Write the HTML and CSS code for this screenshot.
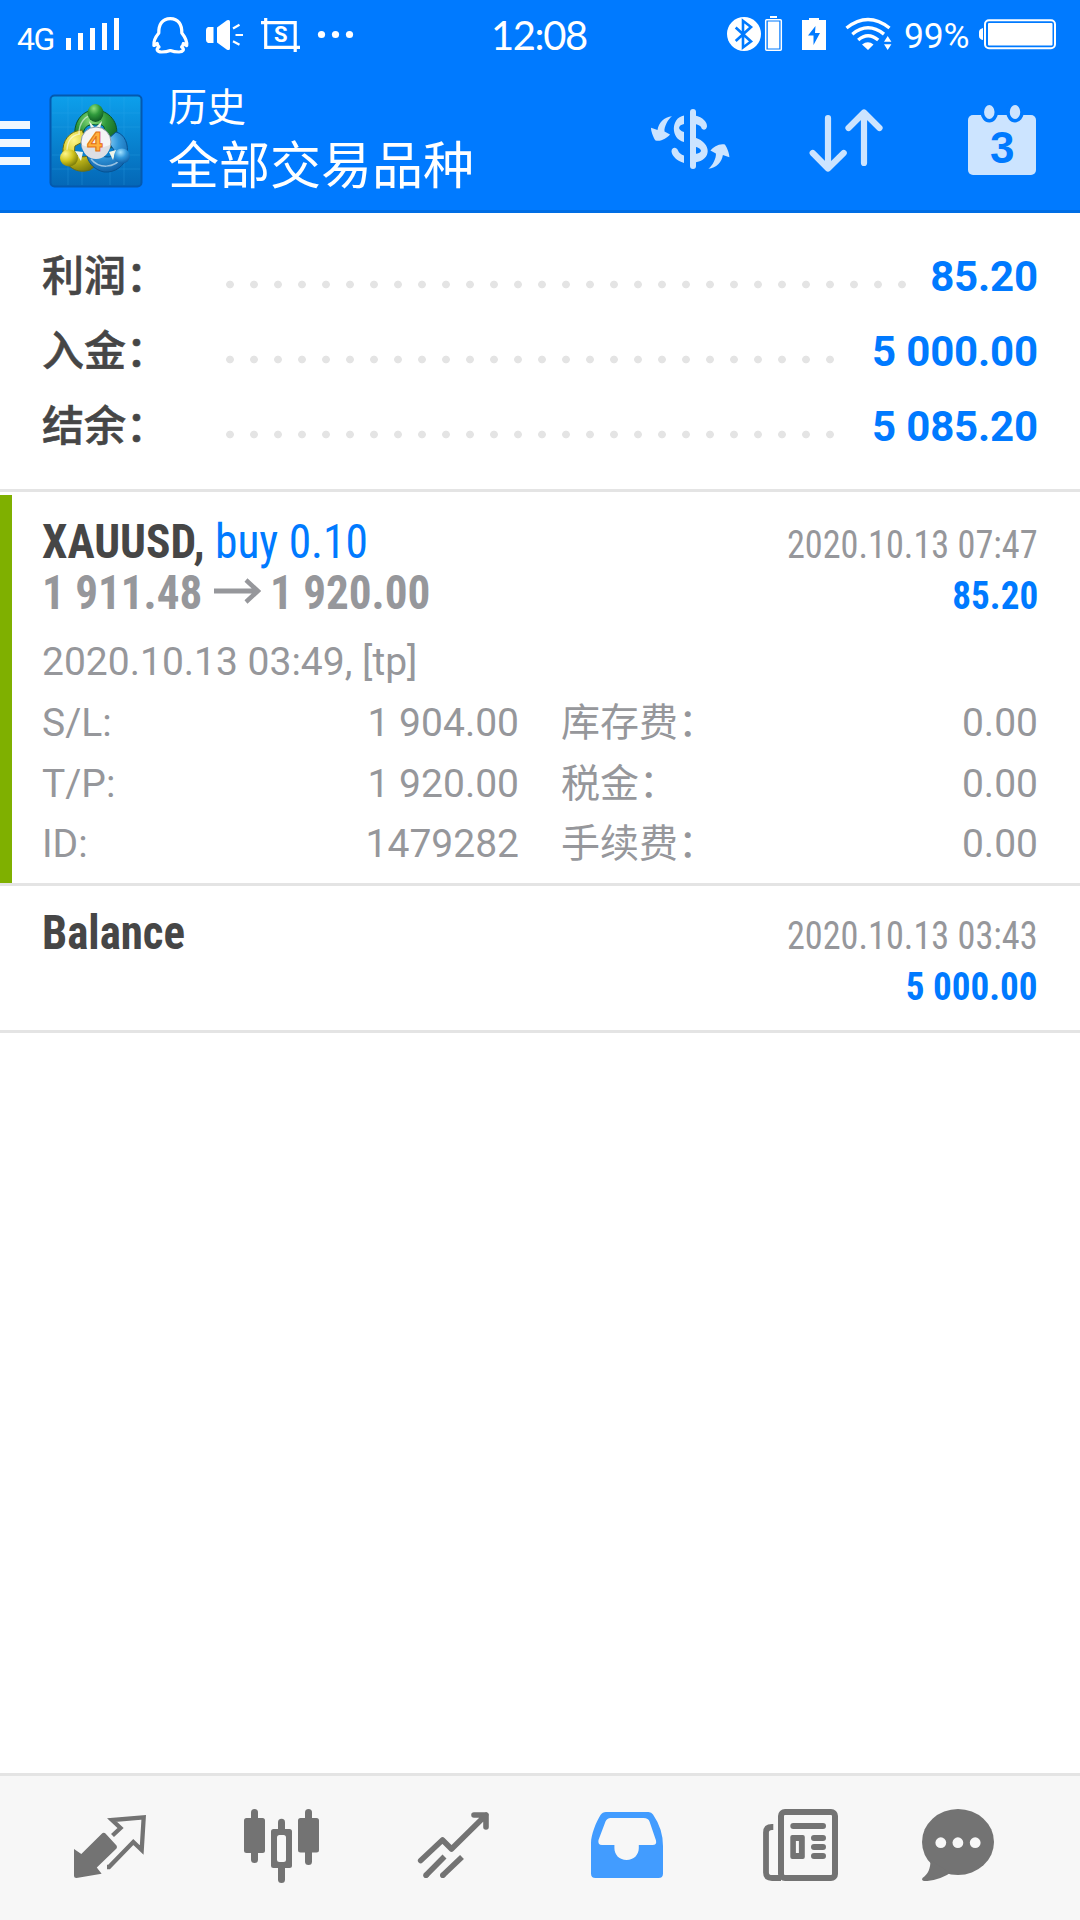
FILE: index.html
```html
<!DOCTYPE html>
<html lang="zh-CN">
<head>
<meta charset="utf-8">
<title>历史</title>
<link rel="stylesheet" href="styles.css">
</head>
<body>
<div class="screen">
  <header class="header">
    <div class="status">
      <span class="network">4G</span>
      <svg class="status-left" viewBox="60 0 300 64" fill="#fff">
        <path d="M66 38h5v12h-5zM78 33h5v17h-5zM90 28h5v22h-5zM102 23h5v27h-5zM114 18h5v32h-5z"/>
        <path fill="none" stroke="#fff" stroke-width="3.2" stroke-linejoin="round" d="M170.3 18.6C162 18.6 158.6 25 158.8 33C155.5 37 153.3 41 153.9 45.5L157.3 43.5C157.4 45 158 46 159 47C155.5 49.5 157.5 52 161.5 52C165.5 52 168 51.5 170.3 50.6C172.6 51.5 175 52 179 52C183 52 185 49.5 181.6 47C182.6 46 183.2 45 183.3 43.5L186.7 45.5C187.3 41 185 37 181.8 33C182 25 178.6 18.6 170.3 18.6Z"/>
        <path d="M208 27h5.5v16H208q-2-1-2-3V30q0-2 2-3zM217 27.500L227 20.300q3-1.300 3 1.500v26.400q0 2.800-3 1.500L217 42.500z"/>
        <path fill="none" stroke="#fff" stroke-width="2.200" d="M233 28.500l6.500-3.800M235.500 35h7.500M233 41.300l6.500 3.500"/>
        <path fill="none" stroke="#fff" stroke-width="3.200" d="M261 22.700h34.200V52M265.700 18v29.300H300"/>
        <text class="crop-letter" x="280.700" y="42.300">S</text>
        <circle cx="321.500" cy="34.500" r="3.600"/><circle cx="335.500" cy="34.500" r="3.600"/><circle cx="349.500" cy="34.500" r="3.600"/>
      </svg>
      <span class="clock">12:08</span>
      <svg class="status-right" viewBox="720 0 180 64" fill="#fff">
        <circle cx="744" cy="34" r="17"/>
        <path fill="none" stroke="#007aff" stroke-width="2.600" d="M735.700 27.500L751 41.500L743 47.500V20.800L751 27L735.700 41"/>
        <path d="M770 16h7v2h-7z"/><rect x="765.700" y="19.700" width="15.600" height="30.600" rx="1" fill="none" stroke="#fff" stroke-width="1.500"/><path d="M767.800 21.500h11.500v27h-11.500z"/>
        <path d="M802 20h7v-2h10v2h7v30h-24z"/><path fill="#007aff" d="M815.500 26L808 35.500h5.500V45L820 33h-5z"/>
        <path fill="none" stroke="#fff" stroke-width="3.400" d="M846.500 28Q868 11 889.500 28M852.300 34.200Q868 21.500 884 34.200M858.200 40Q868 31.500 878.200 40"/>
        <path d="M862 44.500Q868 40 873.500 44.500L868 50zM887.700 36l3.700 5.800h-7.400zM887.700 50l3.700-5.800h-7.400z"/>
      </svg>
      <span class="percent">99%</span>
      <svg class="battery" viewBox="976 0 84 64" fill="#fff">
        <rect x="985" y="20.300" width="70" height="28" rx="4" fill="none" stroke="#fff" stroke-width="2"/>
        <rect x="988" y="23" width="64.500" height="22.500" rx="1"/>
        <path d="M983 28v12q-4-1-4-4v-4q0-3 4-4z"/>
      </svg>
    </div>
    <div class="toolbar">
      <svg class="menu" viewBox="0 64 49 146" fill="#eff7ff"><path d="M0 121h30v8H0zM0 139h30v8H0zM0 157h30v8H0z"/></svg>
      <svg class="logo" viewBox="0 0 94 94">
        <defs>
          <linearGradient id="bg" x2="0" y2="1"><stop offset="0" stop-color="#0da0ec"/><stop offset="1" stop-color="#0467b6"/></linearGradient>
          <radialGradient id="green" cx=".4" cy=".25" r=".8"><stop offset="0" stop-color="#8fe07f"/><stop offset=".45" stop-color="#2f9a3c"/><stop offset="1" stop-color="#0b5320"/></radialGradient>
          <radialGradient id="yellow" cx=".3" cy=".25" r=".85"><stop offset="0" stop-color="#fdf68a"/><stop offset=".5" stop-color="#d2c51d"/><stop offset="1" stop-color="#6f7309"/></radialGradient>
          <radialGradient id="blue" cx=".4" cy=".25" r=".85"><stop offset="0" stop-color="#a5e2ff"/><stop offset=".45" stop-color="#3197db"/><stop offset="1" stop-color="#07529b"/></radialGradient>
        </defs>
        <rect x="1.500" y="1.500" width="91" height="91" rx="4" fill="url(#bg)" stroke="#0459ae" stroke-width="2"/>
        <path d="M19 3v88M33 3v88M61 3v88M75 3v88M3 19h88M3 33h88M3 61h88M3 75h88" stroke="#3ab0f0" stroke-width=".6" opacity=".4"/>
        <path d="M26 43C24 26 35 16 46 16C60 16 71 29 67 44C66 52 62 54 57 56L53 43C58 34 55 29 47 31C38 29 34 35 34 42Z" fill="url(#green)" stroke="#0c5526"/>
        <path d="M33 36C20 37 13 47 14 59C17 74 28 80 41 76L51 68L39 62C29 65 24 60 26 52L37 46Z" fill="url(#yellow)" stroke="#6d6d10"/>
        <path d="M67 38C76 40 80 51 78 61C76 72 66 79 55 78C46 76 40 70 38 62L50 61C60 65 66 63 65 56L58 46Z" fill="url(#blue)" stroke="#075292"/>
        <path d="M30 40C30 29 36 21 45 21M18 57C18 47 23 41 31 40M42 65C49 74 65 76 74 62" fill="none" stroke="#fff" stroke-width="1.500" opacity=".55"/>
        <path d="M40 27L46 34L53 27L50 38H43ZM26 57L34 58L32 67ZM60 58L67 56L64 66Z" fill="#eef5e9"/>
        <ellipse cx="46.500" cy="19" rx="8" ry="9" fill="url(#green)"/>
        <ellipse cx="20" cy="64" rx="9" ry="8.500" fill="url(#yellow)"/>
        <ellipse cx="73" cy="62" rx="8" ry="7.500" fill="url(#blue)"/>
        <circle cx="47" cy="48" r="15" fill="#f4f4f6" stroke="#8c9bab"/>
        <path d="M33 51Q47 57 61 51A14 14 0 0 1 33 51Z" fill="#dddfe4"/>
        <text class="logo-digit" x="46" y="57">4</text>
      </svg>
      <div class="titles">
        <span class="subtitle">历史</span>
        <span class="title">全部交易品种</span>
      </div>
      <svg class="action" viewBox="642 64 96 146" fill="#cce4ff">
        <rect x="690" y="109" width="6" height="60" rx="3"/>
        <path d="M695 115.500C703 117 707 122 707 126.500C706 131 702 130.500 701 127C700 125.500 698 124.500 695 124ZM695 137.500C712 143 712 160 695 162.500V154C703 153 703 149 695 146.500ZM684 115.500C670.500 118 670.500 139 684 142V132C677.500 130 677.500 125.500 684 124ZM684 163C677 161 672 156 671.500 151.500C671.500 147 676.500 146.500 678 150.500C679 153 681 154.500 684 155.500Z"/>
        <path id="swap" d="M672 116.300C664 117 658.500 123 657.500 130L651 127.700C651 131 653 137 655.500 140.500C661 142 667 138 670 134.500L664.500 131.500C664 127 668 119 672 116.300Z"/>
        <use href="#swap" transform="rotate(180 690.200 142.500)"/>
      </svg>
      <svg class="action" viewBox="798 64 96 146" fill="none" stroke="#cce4ff" stroke-width="6.200" stroke-linecap="round" stroke-linejoin="round">
        <path d="M828 118v50M812.700 153L828 168.500L843.700 153M864 163v-50M848.500 128L864 112.500L879.500 128"/>
      </svg>
      <svg class="action" viewBox="954 64 96 146" fill="#cce4ff">
        <rect x="968" y="115" width="68" height="60" rx="5"/>
        <g stroke="#007aff" stroke-width="3.500"><ellipse cx="989.300" cy="112" rx="7" ry="8.700"/><ellipse cx="1015" cy="112" rx="7" ry="8.700"/></g>
        <text class="calendar-digit" x="1002.300" y="162.500">3</text>
      </svg>
    </div>
  </header>

  <section class="summary">
    <div class="sum-row"><span class="sum-label">利润：</span><span class="dots"></span><span class="sum-value">85.20</span></div>
    <div class="sum-row"><span class="sum-label">入金：</span><span class="dots"></span><span class="sum-value">5 000.00</span></div>
    <div class="sum-row"><span class="sum-label">结余：</span><span class="dots"></span><span class="sum-value">5 085.20</span></div>
  </section>

  <section class="entry trade">
    <div class="line"><div class="heading">XAUUSD, <span class="side">buy 0.10</span></div><div class="date">2020.10.13 07:47</div></div>
    <div class="line"><div class="heading prices">1 911.48<svg class="arrow" viewBox="0 0 50 26" preserveAspectRatio="none"><path d="M0 13H46M34 2L46.500 13L34 24" fill="none" stroke="#96979b" stroke-width="4.800"/></svg>1 920.00</div><div class="amount">85.20</div></div>
    <div class="details">
      <div class="detail comment"><span>2020.10.13 03:49, [tp]</span></div>
      <div class="detail"><span>S/L:</span><span>1 904.00</span></div>
      <div class="detail"><span>库存费：</span><span>0.00</span></div>
      <div class="detail"><span>T/P:</span><span>1 920.00</span></div>
      <div class="detail"><span>税金：</span><span>0.00</span></div>
      <div class="detail"><span>ID:</span><span>1479282</span></div>
      <div class="detail"><span>手续费：</span><span>0.00</span></div>
    </div>
  </section>

  <section class="entry balance">
    <div class="line"><div class="heading narrow">Balance</div><div class="date">2020.10.13 03:43</div></div>
    <div class="line total"><div class="amount">5 000.00</div></div>
  </section>

  <nav class="tabs">
    <svg class="tab" viewBox="22 1776 173 144">
      <path d="M74 1849L81.300 1854L101.500 1834Q103.500 1832 105.500 1833.500L116.500 1845.500Q117.500 1847 116.500 1848.500L96.800 1867.600L101.600 1873.700L76.500 1878Q74 1878 74 1875.500Z"/>
      <path class="stroke" stroke-width="4.300" d="M107 1867H109L133.300 1842L141.700 1850L143.700 1817.300L112 1820L120.500 1828L112.500 1835.500"/>
    </svg>
    <svg class="tab" viewBox="195 1776 173 144">
      <rect x="251" y="1809" width="7" height="54" rx="3.500"/><rect x="244" y="1818" width="21" height="35" rx="2.500"/>
      <rect x="278" y="1818.700" width="7" height="64.300" rx="3.500"/><rect x="271" y="1829" width="21" height="39" rx="2.500"/><rect class="hole" x="277" y="1835" width="9" height="27" rx="2.500"/>
      <rect x="305" y="1809" width="7" height="56" rx="3.500"/><rect x="298" y="1818" width="21" height="34.500" rx="2.500"/>
    </svg>
    <svg class="tab" viewBox="368 1776 173 144">
      <path class="stroke round" stroke-width="5.600" d="M420.700 1860.500L442.500 1840L451.500 1849L486 1815M474 1815H486V1827"/>
      <path class="stroke" stroke-width="5.600" d="M426 1875.300L444.500 1856.500M442.800 1875.300L462 1857"/>
      <circle cx="426" cy="1875.300" r="2.800"/><circle cx="442.800" cy="1875.300" r="2.800"/>
    </svg>
    <svg class="tab active" viewBox="541 1776 173 144">
      <path fill-rule="evenodd" d="M606 1812H648.500Q651.500 1812 653 1814.500Q663 1829 663 1846V1873.500Q663 1878 658.500 1878H595.500Q591 1878 591 1873.500V1843C591 1835 596 1822 600.500 1815Q602.500 1812 606 1812ZM610.600 1818Q607 1818 605.500 1821.500L598.500 1840Q597.500 1845 602 1845H614.400V1848C614.400 1855 619.500 1860 626.600 1860S638.800 1855 638.800 1848V1845H652.500Q657 1845 656 1840.500L649.500 1821.500Q648.500 1818 643.500 1818Z"/>
    </svg>
    <svg class="tab" viewBox="714 1776 173 144">
      <rect class="stroke" stroke-width="6" x="781" y="1812" width="54" height="66" rx="4"/>
      <path class="stroke" stroke-width="5.800" d="M773.300 1827H772Q766 1827 766 1832.500V1872.500Q766 1878 772 1878H781"/>
      <path class="stroke round" stroke-width="6" d="M793.300 1826H823M814 1838H823M814 1847H823M814 1856H823"/>
      <rect x="790.300" y="1835" width="14.500" height="24" rx="2"/><rect class="hole" x="795.900" y="1841" width="3" height="12"/>
    </svg>
    <svg class="tab" viewBox="887 1776 173 144">
      <ellipse cx="958" cy="1842" rx="36" ry="33"/>
      <path d="M930.500 1860C930.500 1869 928 1874 922.500 1878Q921 1880.500 924.500 1881C932 1881 942 1878.500 950 1873Z"/>
      <g class="hole"><circle cx="940.800" cy="1842.700" r="5.400"/><circle cx="957.900" cy="1842.700" r="5.400"/><circle cx="975.200" cy="1842.700" r="5.400"/></g>
    </svg>
  </nav>
</div>
</body>
</html>
```
FILE: styles.css
```css
* { box-sizing: border-box; }

body {
  margin: 0;
  background: #fff;
  font-family: Roboto, "Noto Sans CJK SC", sans-serif;
}

svg { display: block; flex: none; }

.screen {
  display: flex;
  flex-direction: column;
  width: 1080px;
  height: 1920px;
  overflow: hidden;
}

/* Header */
.header {
  height: 213px;
  background: #007aff;
  border-bottom: 3px solid #006ee5;
  color: #fff;
}

.status {
  display: flex;
  height: 64px;
  line-height: 64px;
  white-space: nowrap;
}

.network {
  width: 60px;
  padding: 7px 0 0 17px;
  font-size: 32px;
  letter-spacing: -1.5px;
}

.status-left { width: 300px; height: 64px; }

.crop-letter {
  font: 700 22px Roboto, sans-serif;
  text-anchor: middle;
}

.clock {
  width: 360px;
  padding: 3px 0 0 131px;
  font-family: Lato, sans-serif;
  font-size: 40px;
  letter-spacing: -1.4px;
}

.status-right { width: 180px; height: 64px; }

.percent {
  width: 76px;
  padding: 4px 0 0 4px;
  font-size: 35.5px;
  letter-spacing: -0.2px;
}

.battery { width: 84px; height: 64px; }

.toolbar {
  display: flex;
  height: 146px;
  padding-right: 30px;
}

.menu { width: 49px; height: 146px; }

.logo { width: 94px; height: 94px; margin-top: 30px; }

.logo-digit {
  font: 700 27px "Open Sans", sans-serif;
  fill: #ffb23b;
  stroke: #e36c16;
  stroke-width: 1px;
  text-anchor: middle;
}

.titles {
  flex: 1;
  display: flex;
  flex-direction: column;
  padding: 19px 0 0 25px;
}

.subtitle { font-size: 39px; line-height: 50px; }
.title { padding-top: 2px; font-size: 51px; line-height: 64px; }

.action { width: 96px; height: 146px; margin-left: 60px; }

.calendar-digit {
  font: 700 44px "Liberation Sans", sans-serif;
  fill: #007aff;
  text-anchor: middle;
}

/* Account totals */
.summary {
  padding: 26px 42px 25px;
  border-bottom: 3px solid #e4e4e4;
}

.sum-row {
  display: flex;
  height: 75px;
  line-height: 75px;
  font-size: 42px;
}

.sum-label {
  width: 184px;
  color: #464646;
  font-weight: 500;
  -webkit-text-stroke: 0.6px #464646;
}

.dots {
  flex: 1;
  margin-right: 23px;
  background: radial-gradient(circle at 4px 45.5px, #e4e4e4 3.5px, transparent 4.2px) 0 0 / 24px 75px repeat-x;
}

.sum-value {
  color: #007aff;
  font-weight: 700;
  letter-spacing: -0.15px;
}

/* History entries */
.entry {
  padding: 21px 42px 0;
  border-bottom: 3px solid #e4e4e4;
}

.trade {
  height: 388px;
  margin-top: 3px;
  padding-left: 30px;
  border-left: 12px solid #7fb000;
  border-bottom: 0;
}

.balance { height: 150px; border-top: 3px solid #e4e4e4; }

.line {
  display: flex;
  justify-content: space-between;
  align-items: baseline;
  height: 51px;
  line-height: 51px;
  font-family: "Roboto Condensed", Roboto, sans-serif;
  font-stretch: 75%;
  white-space: nowrap;
}

.heading {
  color: #464646;
  font-size: 48px;
  font-weight: 700;
  transform: scaleX(0.946);
  transform-origin: left;
}

.narrow { transform: scaleX(0.935); }
.side { color: #007aff; font-weight: 400; }
.prices { color: #96979b; transform: scaleX(0.94); }

.arrow {
  display: inline-block;
  width: 50px;
  height: 26px;
  margin: 0 10px 0 12px;
  vertical-align: 5px;
}

.date, .amount { font-size: 39px; transform-origin: right; }
.date { color: #96979b; transform: scaleX(0.93); }
.amount { color: #007aff; font-weight: 700; transform: scaleX(0.952); }

.total { justify-content: flex-end; padding-top: 4px; }

.details {
  display: grid;
  grid-template-columns: 477px 477px;
  grid-auto-rows: 60.75px;
  column-gap: 42px;
  padding-top: 14px;
}

.detail {
  display: flex;
  justify-content: space-between;
  color: #96979b;
  font-size: 39px;
  line-height: 60.75px;
}

.comment { grid-column: 1 / -1; }

/* Bottom tabs */
.tabs {
  display: flex;
  height: 147px;
  margin-top: auto;
  padding-left: 22px;
  background: #f7f7f7;
  border-top: 3px solid #e4e4e4;
}

.tab { width: 173px; height: 144px; fill: #737373; }
.active { fill: #429cff; }
.stroke { fill: none; stroke: #737373; }
.round { stroke-linecap: round; stroke-linejoin: round; }
.hole { fill: #f7f7f7; }
```
